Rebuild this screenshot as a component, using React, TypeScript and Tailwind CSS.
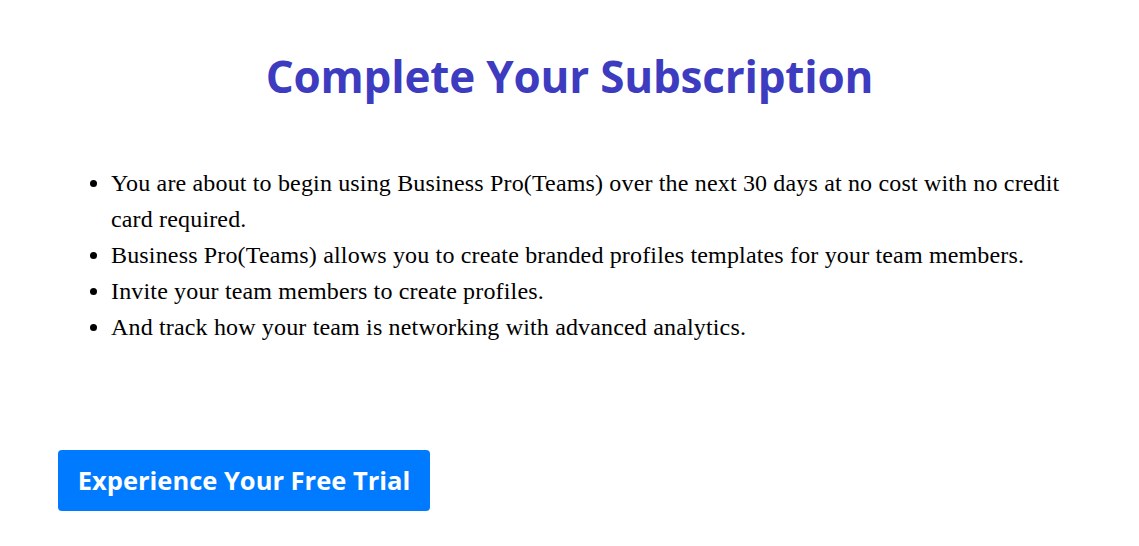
export default function App() {
  const items = [
    'You are about to begin using Business Pro(Teams) over the next 30 days at no cost with no credit card required.',
    'Business Pro(Teams) allows you to create branded profiles templates for your team members.',
    'Invite your team members to create profiles.',
    'And track how your team is networking with advanced analytics.',
  ];

  return (
    <div className="min-h-screen bg-white px-[58px] pt-[46px]">
      <h1 className="text-center font-['Open_Sans',sans-serif] text-[44px] font-bold leading-[60px] tracking-[-0.2px] text-[#3d3bc0]">
        Complete Your Subscription
      </h1>

      <ul className="mt-[59px] list-disc pl-[53px] font-['Liberation_Serif',serif] text-[24px] leading-[36px] tracking-[0.16px] text-black">
        {items.map((t) => (
          <li key={t}>{t}</li>
        ))}
      </ul>

      <button className="mt-[105px] h-[61px] w-[372px] rounded-[4px] bg-[#007bff] font-['Open_Sans',sans-serif] text-[25.5px] font-bold text-white">
        Experience Your Free Trial
      </button>
    </div>
  );
}
